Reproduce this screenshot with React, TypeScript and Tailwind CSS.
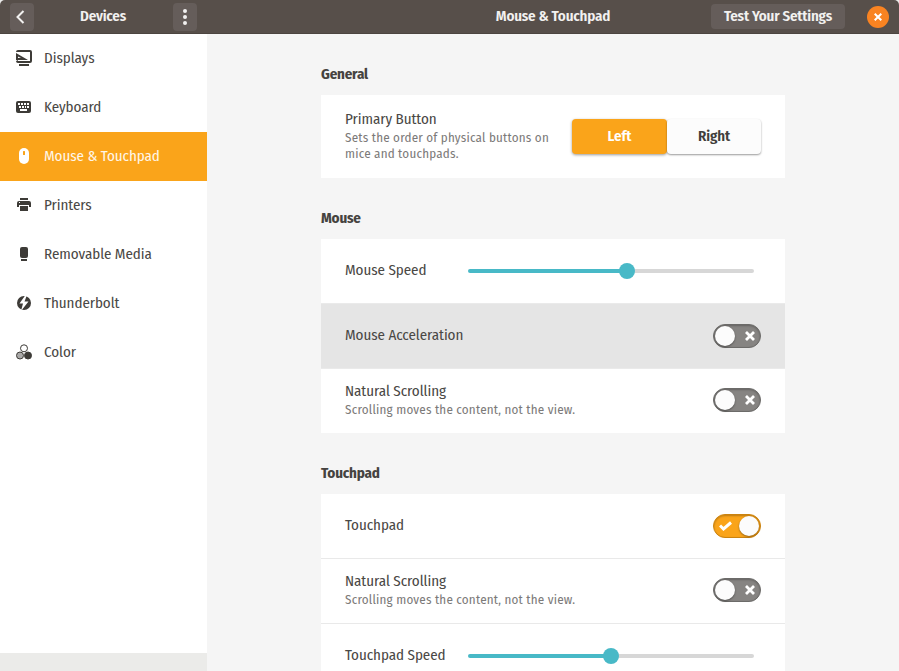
import type { ReactNode } from "react";

const BASE = "font-['Fira_Sans_Condensed','Fira_Sans','Noto_Sans',sans-serif] font-normal";

function DisplayIcon() {
  return (
    <svg width="16" height="16" viewBox="0 0 16 16" fill="#3d3b37">
      <path fillRule="evenodd" d="M0 2Q0 0 2 0H14Q16 0 16 2V11Q16 13 14 13H2Q0 13 0 11L2 10V11H14V2H1Z" />
      <path fillRule="evenodd" d="M0 3L12 10H0ZM2 6.5V8H5Z" />
      <path d="M3 14H13V16H3Z" />
    </svg>
  );
}

function KeyboardIcon() {
  return (
    <svg width="16" height="16" viewBox="0 0 16 16">
      <rect x="0" y="2" width="15" height="12" rx="2" fill="#3d3b37" />
      <path d="M2 4h2v2H2zM5 4h2v2H5zM8 4h2v2H8zM11 4h2v2h-2zM3 7h2v2H3zM6 7h2v2H6zM9 7h1v2H9zM11 7h2v2h-2zM4 10h7v2H4z" fill="#fff" />
    </svg>
  );
}

function MouseIcon() {
  return (
    <svg width="16" height="16" viewBox="0 0 16 16">
      <rect x="3" y="0" width="10" height="16" rx="5" fill="#fff" />
      <rect x="7" y="3" width="2" height="4" rx="0.5" fill="#faa41a" />
    </svg>
  );
}

function PrinterIcon() {
  return (
    <svg width="16" height="16" viewBox="0 0 16 16" fill="#3d3b37">
      <path d="M4 1h8v2H4z" />
      <path fillRule="evenodd" d="M3 4h10q2 0 2 2v4h-2V8H3v2H1V6q0-2 2-2zM3 5v1h1V5z" />
      <path d="M4 9h8v5H4z" />
    </svg>
  );
}

function MediaIcon() {
  return (
    <svg width="16" height="16" viewBox="0 0 16 16" fill="#3d3b37">
      <rect x="4" y="1" width="8" height="11" rx="2" />
      <path d="M5 13h6v2H5z" />
    </svg>
  );
}

function BoltIcon() {
  return (
    <svg width="16" height="16" viewBox="0 0 16 16">
      <circle cx="8" cy="8" r="7" fill="#3d3b37" />
      <path d="M9.5 0L3.5 8.5H7L5 16L12.5 6.5H8.5L11 0Z" fill="#fff" />
    </svg>
  );
}

function ColorIcon() {
  return (
    <svg width="16" height="16" viewBox="0 0 16 16" stroke="#3d3b37">
      <circle cx="8" cy="4.3" r="3.5" fill="#fff" />
      <circle cx="4" cy="11.5" r="3.5" fill="#aaa9a8" />
      <circle cx="12" cy="11.5" r="3.5" fill="#3d3b37" />
    </svg>
  );
}

const ITEMS: { label: string; icon: ReactNode }[] = [
  { label: "Displays", icon: <DisplayIcon /> },
  { label: "Keyboard", icon: <KeyboardIcon /> },
  { label: "Mouse & Touchpad", icon: <MouseIcon /> },
  { label: "Printers", icon: <PrinterIcon /> },
  { label: "Removable Media", icon: <MediaIcon /> },
  { label: "Thunderbolt", icon: <BoltIcon /> },
  { label: "Color", icon: <ColorIcon /> },
];

function Switch({ on = false }: { on?: boolean }) {
  return on ? (
    <div className="flex h-6 w-12 items-center justify-between rounded-full border border-[#cb830f] bg-[#faa41a] pr-px pl-[5px] shadow-[inset_0_1px_2px_rgba(0,0,0,0.25)]">
      <svg width="13" height="10" viewBox="0 0 13 10" fill="none" stroke="#fff" strokeWidth="3">
        <path d="M1 4.5L4.5 8L12 1.5" />
      </svg>
      <div className="size-5 rounded-full bg-[#fcfcfc] shadow-[0_1px_2px_rgba(0,0,0,0.4)]" />
    </div>
  ) : (
    <div className="flex h-6 w-12 items-center justify-between rounded-full border border-[#6c6b69] bg-[#868482] pr-[5px] pl-px shadow-[inset_0_1px_2px_rgba(0,0,0,0.25)]">
      <div className="size-5 rounded-full bg-[#fcfcfc] shadow-[0_1px_2px_rgba(0,0,0,0.4)]" />
      <svg width="10" height="10" viewBox="0 0 10 10" stroke="#fff" strokeWidth="2.8">
        <path d="M1 1L9 9M9 1L1 9" />
      </svg>
    </div>
  );
}

function Slider({ fill }: { fill: string }) {
  return (
    <div className="mr-[7px] mb-px flex h-4 w-[286px] items-center">
      <div className={`h-1 rounded-l-full bg-[#48b9c7] ${fill}`} />
      <div className="z-10 -mx-2 size-4 shrink-0 rounded-full bg-[#48b9c7]" />
      <div className="h-1 flex-1 rounded-r-full bg-[#d7d7d7]" />
    </div>
  );
}

function Row({ title, note, control, className }: { title: string; note?: string; control: ReactNode; className: string }) {
  return (
    <div className={`flex shrink-0 items-center justify-between px-6 ${className}`}>
      <div className="pb-px">
        <div className="mb-px leading-[19px] whitespace-nowrap">{title}</div>
        {note && <div className="text-[13px] leading-4 tracking-[0.2px] whitespace-pre text-[#7c7a79]">{note}</div>}
      </div>
      {control}
    </div>
  );
}

export default function App() {
  return (
    <div className={`${BASE} flex h-[671px] w-[899px] flex-col overflow-hidden bg-[#ebebe9] text-[15px] tracking-[-0.05px] text-[#4a4845]`}>
      <header className="flex h-[34px] shrink-0 items-center rounded-t-[5px] border-b border-[#4c4540] bg-[#574f4a] font-semibold tracking-[-0.2px] text-[#f2f1f0]">
        <div className="flex w-[207px] items-center justify-between pr-2.5 pl-2.5">
          <div className="flex h-7 w-6 items-center justify-center rounded-[4px] bg-[#655d5a]">
            <svg className="mr-[5px]" width="10" height="14" viewBox="0 0 10 14" fill="none" stroke="#f2f1f0" strokeWidth="2">
              <path d="M8.5 1L2.5 7L8.5 13" />
            </svg>
          </div>
          <span className="pr-px pb-px leading-5">Devices</span>
          <div className="flex h-7 w-6 items-center justify-center rounded-[4px] bg-[#655d5a]">
            <svg width="4" height="16" viewBox="0 0 4 16" fill="#f2f1f0">
              <circle cx="2" cy="2" r="2" />
              <circle cx="2" cy="8" r="2" />
              <circle cx="2" cy="14" r="2" />
            </svg>
          </div>
        </div>
        <div className="flex-1 pl-[188px] text-center whitespace-nowrap">Mouse &amp; Touchpad</div>
        <div className="flex h-[25px] w-[134px] items-center justify-center rounded-[4px] bg-[#655d5a]">Test Your Settings</div>
        <div className="mr-2.5 ml-[22px] flex size-[22px] items-center justify-center rounded-full bg-[#f98321]">
          <svg width="8" height="8" viewBox="0 0 8 8" stroke="#fff" strokeWidth="2">
            <path d="M.7 .7L7.3 7.3M7.3 .7L.7 7.3" />
          </svg>
        </div>
      </header>
      <div className="flex min-h-0 flex-1">
        <nav className="h-[619px] w-[207px] shrink-0 bg-white">
          {ITEMS.map((item, i) => (
            <div
              key={item.label}
              className={`flex h-[49px] items-center gap-3 pl-4 ${i === 2 ? "bg-[#faa41a] text-[#fff6e8]" : ""}`}
            >
              <div className="pb-px">{item.icon}</div>
              <span className="whitespace-nowrap">{item.label}</span>
            </div>
          ))}
        </nav>
        <main className="flex flex-1 flex-col bg-[#f5f5f5] pl-[114px]">
          <h2 className="mt-[30px] mb-[11px] leading-5 font-bold tracking-[-0.2px] text-[#454340]">General</h2>
          <section className="w-[464px] shrink-0 bg-white">
            <Row
              title="Primary Button"
              note={"Sets the order of physical buttons on\nmice and touchpads."}
              className="h-[83px]"
              control={
                <div className="flex h-[35px] w-[189px] rounded-[4px] font-semibold tracking-[-0.1px] text-[#403e3b]">
                  <div className="flex w-[95px] items-center justify-center rounded-[4px] bg-[#faa41a] text-white shadow-[0_1px_3px_rgba(0,0,0,0.4)]">Left</div>
                  <div className="flex flex-1 items-center justify-center rounded-[4px] bg-[#fcfcfc] shadow-[0_1px_2px_rgba(0,0,0,0.4)]">Right</div>
                </div>
              }
            />
          </section>
          <h2 className="mt-[30px] mb-[11px] leading-5 font-bold tracking-[-0.2px] text-[#454340]">Mouse</h2>
          <section className="w-[464px] shrink-0 bg-white">
            <Row title="Mouse Speed" className="h-16" control={<Slider fill="w-[159px]" />} />
            <Row title="Mouse Acceleration" className="h-[66px] border-y border-[#eaeaea] bg-[#e5e5e5]" control={<Switch />} />
            <Row title="Natural Scrolling" note="Scrolling moves the content, not the view." className="h-16 pb-0.5" control={<Switch />} />
          </section>
          <h2 className="mt-[30px] mb-[11px] leading-5 font-bold tracking-[-0.2px] text-[#454340]">Touchpad</h2>
          <section className="w-[464px] shrink-0 bg-white">
            <Row title="Touchpad" className="h-16" control={<Switch on />} />
            <Row title="Natural Scrolling" note="Scrolling moves the content, not the view." className="h-[66px] border-y border-[#e9e9e9] pb-0.5" control={<Switch />} />
            <Row title="Touchpad Speed" className="h-16" control={<Slider fill="w-[143px]" />} />
          </section>
        </main>
      </div>
    </div>
  );
}
